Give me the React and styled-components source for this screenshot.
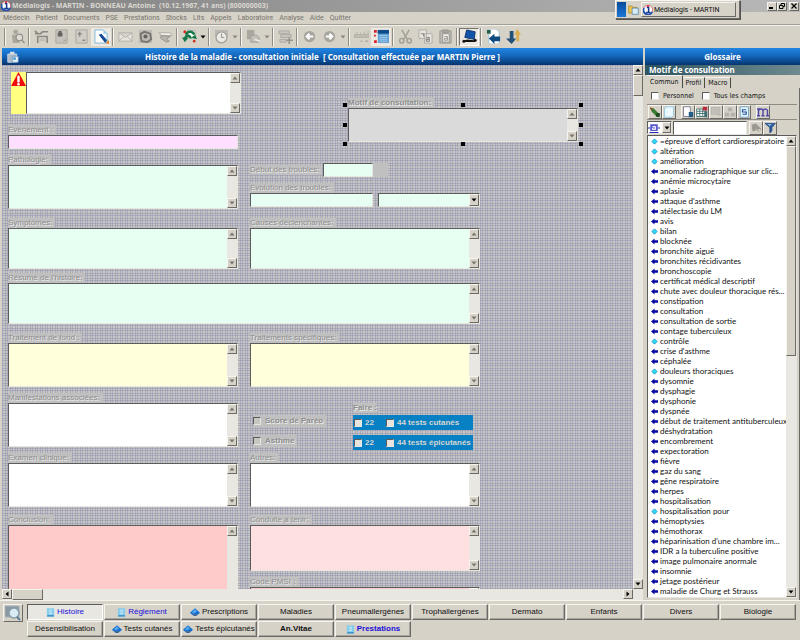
// src/App.jsx
import { useState } from 'react';
import styled, { createGlobalStyle, css } from 'styled-components';

const GlobalStyle = createGlobalStyle`
  * {
    box-sizing: border-box;
  }

  body {
    margin: 0;
    background: #d6d2c8;
    color: #101010;
    font-family: 'Liberation Sans', Arial, sans-serif;
    font-size: 8px;
    line-height: 10px;
  }

  button, input, select, textarea {
    font: inherit;
    color: inherit;
    margin: 0;
    padding: 0;
    border-radius: 0;
  }

  svg {
    flex: none;
  }
`;

const raised = css`
  border: 1px solid;
  border-color: #f6f4ee #6c6a66 #6c6a66 #f6f4ee;
  background: #d6d2c8;
`;

const sunken = css`
  border: 1px solid;
  border-color: #5c5c5c #e8e6e0 #e8e6e0 #5c5c5c;
`;

const Window = styled.div`
  display: grid;
  grid-template-rows: 12px 12px 24px minmax(0, 1fr) 40px;
  height: 100vh;
  overflow: hidden;
`;

const TitleBar = styled.header`
  display: flex;
  align-items: center;
  gap: 1px;
  padding: 0 1px;
  background: linear-gradient(90deg, #828282, #b8b8b8);
  color: #dad7d0;
  font-family: 'Noto Sans', sans-serif;
  font-size: 7px;
  font-weight: bold;
  white-space: pre;
`;

const WindowControls = styled.div`
  display: flex;
  margin-left: auto;
`;

const ControlButton = styled.button`
  ${raised}
  display: flex;
  align-items: center;
  justify-content: center;
  width: 10px;
  height: 9px;

  &:last-child {
    margin-left: 2px;
  }
`;

const MenuBar = styled.nav`
  display: flex;
  align-items: center;
  gap: 6px;
  padding: 0 3px;
  font-family: Roboto, sans-serif;
  font-size: 7px;
`;

const MenuLink = styled.a`
  color: #77736c;
  text-decoration: none;
`;

const ToolBar = styled.div`
  display: flex;
  align-items: center;
  padding: 0 3px;
  border-top: 1px solid #a29f98;
  box-shadow: inset 0 1px #f2f0ea;
`;

const Separator = styled.span`
  width: 2px;
  height: 18px;
  margin: 0 1px;
  border-left: 1px solid #8e8b84;
  border-right: 1px solid #f6f4ee;
`;

const ToolButton = styled.button`
  display: flex;
  align-items: center;
  justify-content: center;
  width: 20px;
  height: 18px;
  border: 1px solid transparent;
  background: none;

  ${props => props.$lit && css`
    background: #ece9e2;
  `}

  ${props => props.$pressed && css`
    border-color: #77746e #fff #fff #77746e;
    background: #ece9e2;
  `}
`;

const CaretButton = styled.button`
  display: flex;
  align-items: center;
  justify-content: center;
  width: 8px;
  height: 18px;
  border: none;
  background: none;
`;

const TaskSwitcher = styled.aside`
  ${raised}
  position: absolute;
  top: 0;
  right: 60px;
  display: flex;
  align-items: center;
  gap: 2px;
  width: 125px;
  height: 19px;
  padding: 1px 3px 1px 1px;
  box-shadow: 1px 1px #55534f;

  &::before {
    content: '';
    width: 9px;
    height: 15px;
    background: linear-gradient(#0a4a9c, #1c78d8);
  }
`;

const TaskButton = styled.button`
  ${raised}
  display: flex;
  flex: 1;
  align-items: center;
  gap: 1px;
  height: 15px;
  padding: 0 1px;
  font-family: Roboto, sans-serif;
  font-size: 7px;
`;

const Workspace = styled.div`
  display: grid;
  grid-template-columns: minmax(0, 1fr) 155px;
  gap: 2px;
  padding-left: 2px;
  min-height: 0;
`;

const Panel = styled.section`
  display: flex;
  flex-direction: column;
  min-height: 0;
  min-width: 0;
`;

const PanelTitle = styled.h1`
  position: relative;
  display: flex;
  flex: none;
  align-items: center;
  justify-content: center;
  height: 17px;
  margin: 0;
  background: linear-gradient(#2186e2, #1467bd 45%, #06356f);
  color: #fff;
  font-family: 'Noto Sans', sans-serif;
  font-size: 8px;
  white-space: pre;

  svg {
    position: absolute;
    left: 5px;
  }
`;

const ScrollArea = styled.div`
  display: grid;
  grid-template-columns: minmax(0, 1fr) 10px;
  flex: 1;
  min-height: 0;
`;

// dotted design surface behind the form fields
const Canvas = styled.div`
  overflow: hidden;
  padding: 7px 6px 0;
  background:
    linear-gradient(90deg, #8888ac68 1px, transparent 1px 3px, #8888ac68 3px 4px, transparent 4px) 0 0 / 5px 5px,
    linear-gradient(#8888ac68 1px, transparent 1px 3px, #8888ac68 3px 4px, transparent 4px) 0 0 / 5px 5px,
    #c6c6c4;
`;

const Columns = styled.div`
  display: grid;
  grid-template-columns: 230px 230px;
  column-gap: 12px;
  align-items: start;
  width: 472px;
  margin-bottom: ${props => props.$after || 0}px;
`;

const Stack = styled.div`
  display: flex;
  flex-direction: column;
  gap: 6px;
`;

const embossed = css`
  background: #c0c0c0;
  color: #8e8e8e;
  text-shadow: 1px 1px #ececec;
`;

const FieldBox = styled.div`
  position: relative;
  width: ${props => props.$width || 'auto'};
  margin: ${props => props.$margin || 0};
`;

const Label = styled.label`
  ${embossed}
  display: block;
  flex: none;
  width: max-content;
  height: 10px;
  padding-right: 3px;
  font-weight: ${props => (props.$bold ? 'bold' : 'normal')};
  white-space: nowrap;
`;

const MemoFrame = styled.div`
  ${sunken}
  display: grid;
  grid-template-columns: minmax(0, 1fr) 10px;
  height: ${props => props.$height}px;
  background: ${props => props.$tint};
`;

const MemoText = styled.textarea`
  display: block;
  width: 100%;
  height: 100%;
  border: none;
  outline: none;
  background: transparent;
  resize: none;
  overflow: hidden;
`;

const LineInput = styled.input`
  ${sunken}
  display: block;
  width: ${props => props.$width || '100%'};
  height: 14px;
  background: ${props => props.$tint || '#e6fff2'};
`;

const Combo = styled.div`
  ${sunken}
  position: relative;
  flex: 1;
  height: 14px;
  background: #e6fff2;
`;

const ComboSelect = styled.select`
  width: 100%;
  height: 100%;
  border: none;
  background: transparent;
  appearance: none;
`;

const ComboArrow = styled.span`
  ${raised}
  position: absolute;
  top: 0;
  right: 0;
  display: flex;
  align-items: center;
  justify-content: center;
  width: 10px;
  height: 12px;
  pointer-events: none;
`;

const Row = styled.div`
  display: flex;
  align-items: center;
  gap: ${props => props.$gap || 0}px;
`;

const Filler = styled.span`
  width: 15px;
  height: 14px;
  background: #c0c0c0;
`;

const AlertBox = styled.div`
  display: grid;
  grid-template-columns: 15px 1fr;
  width: 230px;
  height: 42px;
  margin: 0 0 5px 3px;
  background: #ffff80;
`;

const Handle = styled.i`
  position: absolute;
  top: ${props => props.$top};
  left: ${props => props.$left};
  width: 4px;
  height: 4px;
  margin: -2px;
  background: #000;
`;

const Selection = styled.div`
  position: absolute;
  inset: 7px -3px -2px;
  pointer-events: none;
`;

const CheckGrid = styled.div`
  display: grid;
  grid-template-columns: 103px 120px;
  row-gap: 5px;
  padding-top: 10px;
`;

const FaireLabel = styled.span`
  ${embossed}
  grid-column: 2;
  width: max-content;
  height: 10px;
  margin-bottom: -3px;
  font-weight: bold;
`;

const CheckLabel = styled.label`
  display: flex;
  align-items: center;
  gap: 4px;
  width: max-content;
  height: 12px;
  white-space: nowrap;

  ${props => props.$embossed && css`
    ${embossed}
    margin-left: 3px;
    padding-right: 3px;
    font-weight: bold;
  `}
`;

const Check = styled.input.attrs({ type: 'checkbox' })`
  ${sunken}
  width: 8px;
  height: 8px;
  appearance: none;
  background: ${props => props.$tint || '#e8e5de'};

  &:checked {
    background: #101010;
  }
`;

const TestStrip = styled.div`
  display: grid;
  grid-template-columns: 32px 1fr;
  align-items: center;
  height: 15px;
  padding-left: 1px;
  background: #0880c4;
  color: #d6d6d2;
  font-weight: bold;

  label {
    gap: 3px;
  }
`;

const VScroll = styled.div`
  display: flex;
  flex-direction: column;
  justify-content: space-between;
  min-height: 0;
  background: #e9e7e2;
`;

const HScroll = styled.div`
  display: flex;
  flex: none;
  height: 11px;
  background: #e9e7e2;
`;

const ArrowButton = styled.button`
  ${raised}
  display: flex;
  flex: none;
  align-items: center;
  justify-content: center;
  width: 10px;
  height: 10px;
`;

const Thumb = styled.div`
  ${raised}
  width: ${props => props.$width || 'auto'};
  height: ${props => props.$height || 'auto'};
  margin: ${props => props.$margin || 0};
`;

const HScrollEnd = styled.div`
  margin: 0 10px 0 auto;
`;

const SubTitle = styled.h2`
  flex: none;
  height: 10px;
  margin: 0;
  padding-left: 4px;
  background: linear-gradient(90deg, #2d5560, #6f8a90);
  color: #fff;
  font-family: 'Noto Sans', sans-serif;
  font-size: 8px;
`;

const TabList = styled.div`
  display: flex;
  flex: none;
  align-items: flex-end;
  height: 13px;
  padding-left: 2px;
  font-family: 'DejaVu Sans Condensed', 'DejaVu Sans', sans-serif;
  font-size: 7px;
`;

const Tab = styled.button`
  height: ${props => (props.$active ? 13 : 11)}px;
  padding: 0 3px;
  border: none;
  border-right: 1px solid #4c4a46;
  border-top: 1px solid #f6f4ee;
  background: none;
`;

const GlossaryBody = styled.div`
  display: flex;
  flex: 1;
  flex-direction: column;
  min-height: 0;
  padding: 0 2px 2px;
  border-right: 1px solid #6c6a66;
`;

const Filters = styled.div`
  display: flex;
  flex: none;
  align-items: center;
  gap: 8px;
  height: 16px;
  padding-left: 4px;
  font-family: 'DejaVu Sans Condensed', 'DejaVu Sans', sans-serif;
  font-size: 7px;
`;

const GlossaryTools = styled.div`
  display: flex;
  flex: none;
  align-items: center;
  height: 16px;
  padding-left: 1px;
  border-top: 1px solid #8e8b84;
  border-bottom: 1px solid #8e8b84;
`;

const GlossaryTool = styled.button`
  ${raised}
  display: flex;
  align-items: center;
  justify-content: center;
  width: 14px;
  height: 14px;
  margin-left: ${props => (props.$spaced ? 5 : 0)}px;
`;

const SearchRow = styled.div`
  display: flex;
  flex: none;
  align-items: center;
  gap: 1px;
  height: 15px;
  padding-right: 20px;
`;

const SearchInput = styled.input`
  ${sunken}
  flex: 1;
  min-width: 0;
  height: 14px;
  margin-right: 1px;
  background: #fff;
`;

const SearchMode = styled.button`
  ${sunken}
  display: flex;
  align-items: center;
  justify-content: space-between;
  width: 25px;
  height: 13px;
  background: #fff;
`;

const MiniArrow = styled.span`
  ${raised}
  display: flex;
  align-items: center;
  justify-content: center;
  width: 9px;
  height: 11px;
`;

const ListFrame = styled.div`
  ${sunken}
  display: grid;
  grid-template-columns: minmax(0, 1fr) 10px;
  flex: 1;
  min-height: 0;
  background: #fff;
`;

const TermList = styled.ul`
  margin: 0;
  padding: 0 0 0 3px;
  list-style: none;
  overflow: hidden;
  font-family: Lato, sans-serif;
`;

const Term = styled.li`
  display: flex;
  align-items: center;
  gap: 2px;
  height: 10px;
  white-space: nowrap;
`;

const Footer = styled.footer`
  display: grid;
  grid-template-columns: 20px minmax(0, 1fr);
  gap: 4px;
  align-items: start;
  padding: 3px 4px 2px 3px;
  border-top: 1px solid #f6f4ee;
`;

const PageTabs = styled.div`
  display: grid;
  grid-template-columns: repeat(10, minmax(0, 1fr));
  gap: 1px;
`;

const PageTab = styled.button`
  ${raised}
  display: flex;
  align-items: center;
  justify-content: center;
  gap: 2px;
  height: 16px;
  white-space: nowrap;
  color: ${props => (props.$blue ? '#1c10d8' : '#101010')};
  font-weight: ${props => (props.$bold ? 'bold' : 'normal')};
  box-shadow: inset -1px -1px #a8a59e;

  ${props => props.$active && css`
    border-color: #5c5c5c #fff #fff #5c5c5c;
    background: #e9e7e2;
    box-shadow: none;
  `}
`;

const InfoButton = styled.button`
  ${raised}
  display: flex;
  align-items: center;
  justify-content: center;
  width: 20px;
  height: 18px;
`;

const Triangle = ({ dir = 'down', color = '#000' }) => {
  const paths = {
    up: 'M0.5 4.5h5L3 1.5z',
    down: 'M0.5 1.5h5L3 4.5z',
    left: 'M4.5 0.5v5L1.5 3z',
    right: 'M1.5 0.5v5L4.5 3z'
  };
  return (
    <svg width="6" height="6" viewBox="0 0 6 6">
      <path d={paths[dir]} fill={color} />
    </svg>
  );
};

const drawings = {
  logo: (
    <>
      <circle cx="8" cy="8" r="7.5" fill="#fff" stroke="#c03040" strokeWidth="1" />
      <path d="M1.5 5A7 7 0 0 0 14.5 11" fill="none" stroke="#1c50b0" strokeWidth="3" />
      <path d="M6 4h3v8M5 12h7" fill="none" stroke="#18388c" strokeWidth="2.4" />
      <circle cx="8" cy="2" r="1.6" fill="#d02030" />
    </>
  ),
  person: (
    <g fill="#aaa79f">
      <circle cx="6" cy="3" r="2.6" />
      <path d="M2 6h7l3 3-2 6H3z" />
      <circle cx="10" cy="9" r="3.5" fill="#dedbd4" stroke="#918e87" strokeWidth="1.2" />
      <path d="M12.5 12l3 3" stroke="#918e87" strokeWidth="1.6" />
    </g>
  ),
  desk: (
    <g fill="none" stroke="#8b8881" strokeWidth="1.7">
      <path d="M1 5h6l2-2h6M3 8h12M4 8v7M14 8v7M1 2l3 3" />
      <path d="M6 10h6v3H6z" fill="#c0bdb6" stroke="none" />
    </g>
  ),
  sheetDark: (
    <>
      <path d="M2 1h12v14H2z" fill="#c6c3bc" stroke="#a9a69f" />
      <path d="M4 4h5v4H4zM5 2h3v2H5z" fill="#66635e" />
      <path d="M10 12h3" stroke="#97948d" />
    </>
  ),
  sheetPlus: (
    <>
      <path d="M2 1h12v14H2z" fill="#d0cdc6" stroke="#aaa7a0" />
      <path d="M6 3v5M4 5h4M9 12h3" stroke="#8b8881" strokeWidth="1.5" />
    </>
  ),
  sheetPen: (
    <>
      <path d="M1 1h9l4 4v10H1z" fill="#fff" stroke="#7ab4d4" />
      <path d="M10 1l4 4h-4z" fill="#94cce8" />
      <path d="M5 6l3-1 6 7-2 3z" fill="#164c94" />
      <path d="M12 15l4-3v4z" fill="#e08428" />
    </>
  ),
  mail: <path d="M1 4h14v9H1zM1 4l7 5 7-5M1 13l5-5M15 13l-5-5" fill="#e6e3dd" stroke="#b4b1aa" />,
  phone: (
    <>
      <path d="M1 1h14v14H1z" fill="#bebbb4" />
      <path d="M3 5l4-2 6 2 1 6-4 3-6-1-1-4z" fill="none" stroke="#77746e" strokeWidth="2" />
      <circle cx="8" cy="8" r="2.2" fill="#64615c" />
    </>
  ),
  hands: (
    <>
      <path d="M1 4h12l2 3H4z" fill="#f0eee9" stroke="#aeaba4" />
      <path d="M3 7l10 1-4 3 3 2-3 1-6-4z" fill="#b8b5ae" stroke="#96938c" />
    </>
  ),
  refresh: (
    <>
      <path d="M6 1l8 1v8l-7-1z" fill="#fff" stroke="#999" strokeWidth=".7" />
      <path d="M4 6C7 1 12 3 13 6M3 11C4 5 9 7 9 10" fill="none" stroke="#157848" strokeWidth="2.6" />
      <path d="M0 9h7l-4 5zM10 9l4-3 2 5z" fill="#157848" />
      <circle cx="3" cy="3" r="1.6" fill="#d83020" />
      <circle cx="13" cy="13" r="1.5" fill="#cc3828" />
    </>
  ),
  clock: (
    <>
      <path d="M1 1h14v7H1z" fill="#bbb8b1" />
      <circle cx="8" cy="9" r="5.8" fill="#eceae4" stroke="#a19e97" strokeWidth="1.3" />
      <path d="M8 5v4h3" fill="none" stroke="#8e8b84" />
    </>
  ),
  database: (
    <>
      <path d="M1 1h8v10H1z" fill="#aaa79f" />
      <path d="M5 8c4-3 9-1 9 2v4H5z" fill="#c2bfb8" stroke="#a19e97" />
      <path d="M9 11l6 2" stroke="#e8e6e1" strokeWidth="2" />
    </>
  ),
  listAdd: (
    <>
      <path d="M1 2h11v3H1zM3 6h11v3H3zM2 11h7v3H2z" fill="#c9c6bf" stroke="#aba8a1" />
      <path d="M12 9v7M9 12h7" stroke="#96938c" strokeWidth="1.8" />
    </>
  ),
  back: (
    <>
      <circle cx="8" cy="8" r="6" fill="#a8a59e" />
      <path d="M12 8H6M8 5L5 8l3 3" fill="none" stroke="#fff" strokeWidth="2.2" />
    </>
  ),
  forward: (
    <>
      <circle cx="8" cy="8" r="6" fill="#a8a59e" />
      <path d="M4 8h6M8 5l3 3-3 3" fill="none" stroke="#fff" strokeWidth="2.2" />
    </>
  ),
  ruler: (
    <>
      <path d="M0 6h16v3H0zM3 3v3M7 4v2M11 3v3M15 2v4" fill="#c0bdb6" stroke="#b2afa8" />
      <path d="M7 13h2M12 13h3" stroke="#96938c" />
    </>
  ),
  form: (
    <>
      <path d="M4 1h12v14H4z" fill="#68a5d5" />
      <path d="M4 1h12v4H4z" fill="#0d4c88" />
      <path d="M6 7h8M6 9h8M6 11h8M6 13h8" stroke="#9cc8ec" />
      <path d="M0 1h3v3H0zM0 6h2v2H0zM0 12h3v3H0z" fill="#dc2430" />
    </>
  ),
  cut: (
    <g fill="none" stroke="#a3a099" strokeWidth="1.6">
      <path d="M4 1l6 10M12 1L6 11" />
      <circle cx="4" cy="12.5" r="2.3" />
      <circle cx="12" cy="12.5" r="2.3" />
    </g>
  ),
  copy: (
    <g fill="#e6e4df" stroke="#b0ada6">
      <path d="M1 1h8v9H1zM7 5h8v10H7z" />
      <path d="M3 5h3v3M9 9h3v4h-3v-2h3" fill="none" stroke="#8b8881" strokeWidth="1.2" />
    </g>
  ),
  paste: (
    <g stroke="#99968f">
      <path d="M2 2h12v13H2z" fill="#bebbb4" />
      <path d="M5 5h7v9H5z" fill="#eceae5" />
      <path d="M5 1h6v3H5z" fill="#a7a49d" />
      <path d="M7 8h3v4H7v-2h3" fill="none" />
    </g>
  ),
  config: (
    <>
      <path d="M5 1l9 2-1 8-10-2z" fill="#1254a8" stroke="#0c3470" />
      <path d="M2 13l4-1 8 1M2 13h11" stroke="#111" strokeWidth="1.6" />
      <circle cx="2" cy="13" r="1.6" fill="#111" />
      <circle cx="14" cy="12" r="1.6" fill="#111" />
    </>
  ),
  importDoc: (
    <>
      <path d="M3 0h8l3 3v13H3z" fill="#fff" stroke="#a8c4d4" />
      <path d="M1 1h4v4H1z" fill="#24604c" />
      <path d="M3 10l6-5v3h6v5H9v3z" fill="#0e4c80" />
    </>
  ),
  swap: (
    <>
      <path d="M4 2h4v8h3l-5 6-6-6h4z" fill="#245078" />
      <path d="M11 13V6H9l3-6 4 6h-2v7z" fill="#dcae52" />
    </>
  ),
  folder: (
    <>
      <path d="M1 3h5l1 2h6v8H1z" fill="#f0c850" stroke="#a8801c" />
      <path d="M6 6h9v9H6z" fill="#d8ecf8" stroke="#487ca8" />
    </>
  ),
  brush: (
    <>
      <path d="M1 2l5 1 8 8-3 4-7-7z" fill="#387c34" />
      <path d="M10 9l5 1-1 5-5-1z" fill="#1c4c20" />
      <path d="M1 2l4 1-1 3z" fill="#a04c20" />
    </>
  ),
  page: (
    <>
      <path d="M4 1h10v12l-2 2H2V4z" fill="#e4f6fe" stroke="#8cc4e0" />
      <path d="M5 5h7M5 8h7M5 11h6" stroke="#fff" />
    </>
  ),
  pageOpen: (
    <>
      <path d="M2 1h9v13H2z" fill="#fff" stroke="#668" />
      <path d="M9 8h6v7H9z" fill="#245c88" />
    </>
  ),
  table: (
    <>
      <path d="M1 4h12v10H1zM1 7h12M1 10h12M5 4v10M9 4v10" fill="#fff" stroke="#286060" />
      <path d="M9 1h6v5H9z" fill="#b82c3c" />
      <path d="M11 7h4v8h-4z" fill="#3a6c70" />
    </>
  ),
  grayList: <path d="M2 2h11v9H2zM4 5h8M4 8h8M10 12h5" fill="#c6c3bc" stroke="#bab7b0" strokeWidth="1.4" />,
  blocks: <path d="M5 2h6v5H5zM1 9h6v5H1zM9 9h6v5H9z" fill="#b4b1aa" />,
  pageS: (
    <>
      <path d="M3 1h11v14H3z" fill="#e4f4fc" stroke="#5c94b8" />
      <path d="M11 5H6v3h5v3H6" fill="none" stroke="#28549c" strokeWidth="1.6" />
    </>
  ),
  macro: <path d="M2 13V5M0 4h3v1c2-2 5-1 5 1v7M8 6c2-3 6-2 6 0v7M0 13h4M6 13h4M12 13h4" fill="none" stroke="#5048a8" strokeWidth="1.9" />,
  binoculars: (
    <g fill="#9b9891">
      <path d="M1 4l6-2 3 3 5 5-3 5-4-3V9l-2 4H2z" />
      <circle cx="12" cy="12" r="2" fill="#cfccc5" />
    </g>
  ),
  funnel: (
    <>
      <path d="M0 2h15L10 8v5l-3 3V8z" fill="#2c5ca0" stroke="#183c74" />
      <path d="M3 3h7L7 6z" fill="#88b4e0" />
    </>
  ),
  search: (
    <>
      <path d="M0 1h14v11H0z" fill="#8a9aa4" stroke="#a8b0b4" />
      <circle cx="9" cy="8" r="5" fill="#d8ecf4" stroke="#8a9ca8" strokeWidth="1.5" />
      <path d="M12 12l3 3" stroke="#5c7c98" strokeWidth="2" />
    </>
  ),
  camera: (
    <>
      <path d="M1 4h12v11H1z" fill="#aebcc8" stroke="#e2e8ee" />
      <path d="M4 1h6v3H4z" fill="#d4dce4" />
      <path d="M7 7h8v8H7z" fill="#eaf4fa" stroke="#5d89b0" />
      <circle cx="10" cy="10" r="2" fill="#4d9ccc" />
    </>
  ),
  note: (
    <>
      <path d="M2 1h12v14H2z" fill="#7cc8ec" stroke="#8cd0ee" />
      <path d="M5 4h6M5 7h6M5 10h6" stroke="#e8f8ff" strokeWidth="1.3" />
      <path d="M2 13h12v2H2z" fill="#2c80bc" />
    </>
  ),
  drop: (
    <>
      <path d="M8 2l8 7-3 3H3L0 9z" fill="#1470cc" />
      <path d="M8 3l3 4-4 3-4-1z" fill="#58a8f0" />
      <path d="M3 12h10l-3 2H6z" fill="#0c3c80" />
    </>
  ),
  warning: (
    <>
      <path d="M8 0l8 15H0z" fill="#f00c0c" />
      <path d="M8 5v5" stroke="#fff" strokeWidth="2.6" strokeLinecap="round" />
      <circle cx="8" cy="13" r="1.4" fill="#fff" />
    </>
  ),
  diamond: <path d="M8 2l6 6-6 6-6-6z" fill="#30dcf4" stroke="#1890d0" strokeWidth="2" />,
  arrow: <path d="M0 8l8-7v4h8v6H8v4z" fill="#0808a4" />,
  ab: (
    <>
      <path d="M3 3h10v9H3z" fill="#5858cc" />
      <path d="M0 8h3M13 8h3M2 14h12" stroke="#2828b4" strokeWidth="1.5" />
      <path d="M6 6h4v4H6V8h4" fill="none" stroke="#fff" strokeWidth="1.2" />
    </>
  )
};

const Icon = ({ name, size = 15 }) => (
  <svg width={size} height={size} viewBox="0 0 16 16" aria-hidden="true">
    {drawings[name]}
  </svg>
);

const menus = [
  'Médecin', 'Patient', 'Documents', 'PSE', 'Prestations', 'Stocks', 'Lits',
  'Appels', 'Laboratoire', 'Analyse', 'Aide', 'Quitter'
];

const tools = [
  '|', 'person', '|', 'desk', 'sheetDark', 'sheetPlus', 'sheetPen', '|',
  'mail', 'phone', 'hands', '|', 'refresh', 'caret', '|', 'clock', 'caretOff', '|',
  'database', 'caretOff', '|', 'listAdd', '|', 'back', 'forward', 'caretOff', '|',
  'ruler', 'form', '|', 'cut', 'copy', 'paste', '|', 'config', '|', 'importDoc', 'swap'
];

const litTools = ['sheetPen', 'form'];

const glossaryTools = ['brush', 'page', 'pageOpen', 'table', 'grayList', 'blocks', 'pageS', 'macro'];

// a leading * marks the terms shared by every field
const terms = [
  "*=épreuve d'effort cardiorespiratoire", '*altération', '*amélioration',
  'anomalie radiographique sur clic...', 'anémie microcytaire', 'aplasie',
  "attaque d'asthme", 'atélectasie du LM', 'avis', '*bilan', 'blocknée',
  'bronchite aiguë', 'bronchites récidivantes', 'bronchoscopie',
  'certificat médical descriptif', 'chute avec douleur thoracique rés...',
  'constipation', 'consultation', 'consultation de sortie', 'contage tuberculeux',
  '*contrôle', "crise d'asthme", 'céphalée', '*douleurs thoraciques', 'dysomnie',
  'dysphagie', 'dysphonie', 'dyspnée', 'début de traitement antituberculeux',
  'déshydratation', 'encombrement', 'expectoration', 'fièvre', 'gaz du sang',
  'gêne respiratoire', 'herpes', 'hospitalisation', '*hospitalisation pour',
  'hémoptysies', 'hémothorax', "héparinisation d'une chambre im...",
  'IDR a la tuberculine positive', 'image pulmonaire anormale', 'insomnie',
  'jetage postérieur', 'maladie de Churg et Strauss'
];

const pages = [
  { name: 'Histoire', icon: 'note', blue: true },
  { name: 'Règlement', icon: 'note', blue: true },
  { name: 'Prescriptions', icon: 'drop' },
  { name: 'Maladies' },
  { name: 'Pneumallergènes' },
  { name: 'Trophallergènes' },
  { name: 'Dermato' },
  { name: 'Enfants' },
  { name: 'Divers' },
  { name: 'Biologie' },
  { name: 'Désensibilisation' },
  { name: 'Tests cutanés', icon: 'drop' },
  { name: 'Tests épicutanés', icon: 'drop' },
  { name: 'An.Vitae', bold: true },
  { name: 'Prestations', icon: 'note', blue: true, bold: true }
];

const green = '#e6fff2';
const yellow = '#ffffdc';

const MemoBox = ({ id, height, tint, label }) => (
  <MemoFrame $height={height} $tint={tint}>
    <MemoText id={id} aria-label={label} />
    <VScroll>
      <ArrowButton aria-label="Monter"><Triangle dir="up" color="#77746e" /></ArrowButton>
      <ArrowButton aria-label="Descendre"><Triangle color="#77746e" /></ArrowButton>
    </VScroll>
  </MemoFrame>
);

const Memo = ({ id, label, height, tint = '#fff', bold, width, margin, children }) => (
  <FieldBox $width={width} $margin={margin}>
    <Label htmlFor={id} $bold={bold}>{label}</Label>
    <MemoBox id={id} height={height} tint={tint} />
    {children}
  </FieldBox>
);

const SelectionHandles = () => (
  <Selection>
    {['0%', '50%', '100%'].map(top =>
      ['0%', '50%', '100%'].map(left => (
        top === '50%' && left === '50%'
          ? null
          : <Handle key={top + left} $top={top} $left={left} />
      ))
    )}
  </Selection>
);

const HistoryForm = () => (
  <Canvas>
    <Columns $after={9}>
      <Stack>
        <AlertBox>
          <Icon name="warning" size={15} />
          <MemoBox height={42} tint="#fff" label="Alerte" />
        </AlertBox>
        <FieldBox>
          <Label htmlFor="evenement">Evènement :</Label>
          <LineInput id="evenement" $tint="#ffdfff" />
        </FieldBox>
        <Memo id="pathologie" label="Pathologie:" height={44} tint={green} />
      </Stack>
      <Stack>
        <Memo
          id="motif"
          label="Motif de consultation:"
          height={34}
          tint="#dadada"
          width="230px"
          margin="26px 0 15px 98px"
          bold
        >
          <SelectionHandles />
        </Memo>
        <Row $gap={1}>
          <Label htmlFor="debut">Début des troubles:</Label>
          <Row>
            <LineInput id="debut" $width="50px" />
            <Filler />
          </Row>
        </Row>
        <FieldBox>
          <Label htmlFor="evolution">Evolution des troubles:</Label>
          <Row $gap={5}>
            <LineInput id="evolution" $width="123px" />
            <Combo>
              <ComboSelect aria-label="Evolution" />
              <ComboArrow><Triangle /></ComboArrow>
            </Combo>
          </Row>
        </FieldBox>
      </Stack>
    </Columns>
    <Columns $after={4}>
      <Memo id="symptomes" label="Symptômes:" height={41} tint={green} />
      <Memo id="causes" label="Causes déclenchantes:" height={41} tint={green} />
    </Columns>
    <Memo id="resume" label="Résumé de l'histoire:" height={41} tint={green} width="472px" margin="0 0 9px" />
    <Columns $after={6}>
      <Memo id="fond" label="Traitement de fond :" height={44} tint={yellow} />
      <Memo id="specifiques" label="Traitements spécifiques:" height={44} tint={yellow} />
    </Columns>
    <Columns $after={3}>
      <Memo id="manifestations" label="Manifestations associées:" height={44} />
      <CheckGrid>
        <FaireLabel>Faire :</FaireLabel>
        <CheckLabel $embossed><Check $tint="#c8c6c0" />Score de Paréo</CheckLabel>
        <TestStrip>
          <CheckLabel><Check />22</CheckLabel>
          <CheckLabel><Check />44 tests cutanés</CheckLabel>
        </TestStrip>
        <CheckLabel $embossed><Check $tint="#c8c6c0" />Asthme</CheckLabel>
        <TestStrip>
          <CheckLabel><Check />22</CheckLabel>
          <CheckLabel><Check />44 tests épicutanés</CheckLabel>
        </TestStrip>
      </CheckGrid>
    </Columns>
    <Columns $after={8}>
      <Memo id="examen" label="Examen clinique:" height={44} />
      <Memo id="autres" label="Autres:" height={44} />
    </Columns>
    <Columns>
      <Memo id="conclusion" label="Conclusion:" height={85} tint="#ffcaca" />
      <Stack>
        <Memo id="conduite" label="Conduite à tenir:" height={46} tint="#ffe0e0" />
        <Memo id="pmsi" label="Code PMSI :" height={46} tint="#ffcaca" />
      </Stack>
    </Columns>
  </Canvas>
);

const Glossary = () => (
  <Panel>
    <PanelTitle>Glossaire</PanelTitle>
    <SubTitle>Motif de consultation</SubTitle>
    <TabList role="tablist">
      <Tab role="tab" $active>Commun</Tab>
      <Tab role="tab">Profil</Tab>
      <Tab role="tab">Macro</Tab>
    </TabList>
    <GlossaryBody>
      <Filters>
        <CheckLabel><Check $tint="#fff" />Personnel</CheckLabel>
        <CheckLabel><Check $tint="#fff" />Tous les champs</CheckLabel>
      </Filters>
      <GlossaryTools>
        {glossaryTools.map(name => (
          <GlossaryTool key={name} aria-label={name} $spaced={name === 'pageOpen' || name === 'macro'}>
            <Icon name={name} size={12} />
          </GlossaryTool>
        ))}
      </GlossaryTools>
      <SearchRow>
        <SearchMode aria-label="Mode">
          <Icon name="ab" size={12} />
          <MiniArrow><Triangle /></MiniArrow>
        </SearchMode>
        <SearchInput aria-label="Recherche" />
        <Row>
          <GlossaryTool aria-label="Chercher"><Icon name="binoculars" size={11} /></GlossaryTool>
          <GlossaryTool aria-label="Filtrer"><Icon name="funnel" size={11} /></GlossaryTool>
        </Row>
      </SearchRow>
      <ListFrame>
        <TermList>
          {terms.map(term => (
            <Term key={term}>
              <Icon name={term[0] === '*' ? 'diamond' : 'arrow'} size={7} />
              {term.replace('*', '')}
            </Term>
          ))}
        </TermList>
        <VScroll>
          <ArrowButton aria-label="Monter"><Triangle dir="up" /></ArrowButton>
          <Thumb $height="210px" $margin="0 0 auto" />
          <ArrowButton aria-label="Descendre"><Triangle /></ArrowButton>
        </VScroll>
      </ListFrame>
    </GlossaryBody>
  </Panel>
);

const App = () => {
  const [page, setPage] = useState('Histoire');

  return (
    <>
      <GlobalStyle />
      <Window>
        <TitleBar>
          <Icon name="logo" size={10} />
          {'Médialogis - MARTIN - BONNEAU Antoine  (10.12.1967, 41 ans) (800000003)'}
          <WindowControls>
            <ControlButton aria-label="Réduire">
              <svg width="6" height="6"><path d="M0 5h4" stroke="#000" strokeWidth="2" /></svg>
            </ControlButton>
            <ControlButton aria-label="Restaurer">
              <svg width="6" height="6"><path d="M2 2V.5h3.5v3H4M.5 2.5h3.5v3H.5z" fill="none" stroke="#000" /></svg>
            </ControlButton>
            <ControlButton aria-label="Fermer">
              <svg width="6" height="6"><path d="M.5.5l5 5M5.5.5l-5 5" stroke="#000" strokeWidth="1.2" /></svg>
            </ControlButton>
          </WindowControls>
        </TitleBar>
        <MenuBar>
          {menus.map(menu => <MenuLink key={menu} href="#">{menu}</MenuLink>)}
        </MenuBar>
        <ToolBar>
          {tools.map((tool, i) => {
            if (tool === '|') return <Separator key={i} />;
            if (tool.startsWith('caret')) {
              return (
                <CaretButton key={i} aria-label="Options">
                  <Triangle color={tool === 'caret' ? '#000' : '#8b8881'} />
                </CaretButton>
              );
            }
            return (
              <ToolButton key={i} aria-label={tool} $lit={litTools.includes(tool)} $pressed={tool === 'config'}>
                <Icon name={tool} />
              </ToolButton>
            );
          })}
        </ToolBar>
        <Workspace>
          <Panel>
            <PanelTitle>
              <Icon name="camera" size={12} />
              {'Histoire de la maladie - consultation initiale  [ Consultation effectuée par MARTIN Pierre ]'}
            </PanelTitle>
            <ScrollArea>
              <HistoryForm />
              <VScroll>
                <ArrowButton aria-label="Monter"><Triangle dir="up" /></ArrowButton>
                <Thumb $height="21px" $margin="0 0 auto" />
                <ArrowButton aria-label="Descendre"><Triangle /></ArrowButton>
              </VScroll>
            </ScrollArea>
            <HScroll>
              <ArrowButton aria-label="Gauche"><Triangle dir="left" /></ArrowButton>
              <Thumb $width="31px" />
              <HScrollEnd>
                <ArrowButton aria-label="Droite"><Triangle dir="right" /></ArrowButton>
              </HScrollEnd>
            </HScroll>
          </Panel>
          <Glossary />
        </Workspace>
        <Footer>
          <InfoButton aria-label="Aperçu"><Icon name="search" size={16} /></InfoButton>
          <PageTabs>
            {pages.map(({ name, icon, blue, bold }) => (
              <PageTab
                key={name}
                $active={name === page}
                $blue={blue}
                $bold={bold}
                onClick={() => setPage(name)}
              >
                {icon && <Icon name={icon} size={icon === 'note' ? 9 : 10} />}
                {name}
              </PageTab>
            ))}
          </PageTabs>
        </Footer>
      </Window>
      <TaskSwitcher>
        <Icon name="folder" size={11} />
        <TaskButton>
          <Icon name="logo" size={10} />
          Médialogis - MARTIN
        </TaskButton>
      </TaskSwitcher>
    </>
  );
};

export default App;
